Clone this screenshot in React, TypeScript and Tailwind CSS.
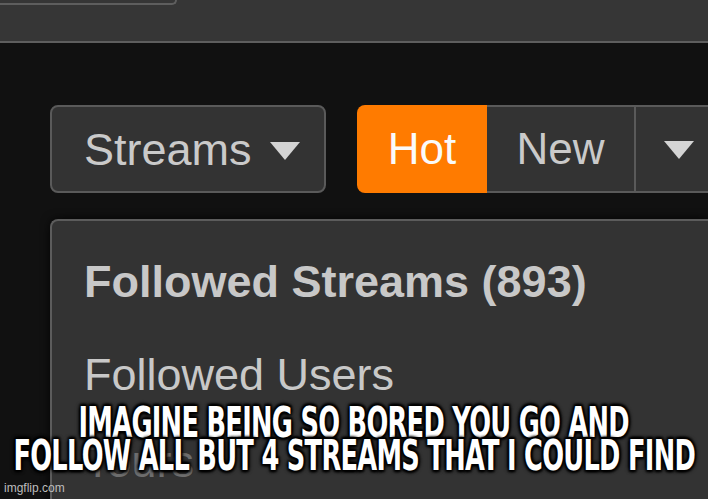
import React from "react";

function Caret({ className = "" }: { className?: string }) {
  return (
    <svg viewBox="0 0 30 18" className={className} aria-hidden="true">
      <path d="M0 0 H30 L15 18 Z" fill="#d4d4d4" />
    </svg>
  );
}

const CAPTION = ["IMAGINE BEING SO BORED YOU GO AND", "FOLLOW ALL BUT 4 STREAMS THAT I COULD FIND"];

export default function App() {
  return (
    <div className="relative h-[499px] w-[708px] overflow-hidden bg-[#111111] font-['Liberation_Sans',Arial,sans-serif]">
      {/* top bar, cut off by the crop */}
      <div className="h-[43px] border-b-2 border-[#5e5e5e] bg-[#363636]">
        <div className="h-[5px] w-[177px] rounded-br-lg border-b-2 border-r-2 border-[#5e5e5e]" />
      </div>

      {/* sort controls */}
      <div className="ml-[50px] mt-[62px] flex h-[88px] gap-[31px]">
        <button
          type="button"
          className="flex w-[276px] items-center gap-[18px] rounded-lg border-2 border-[#5a5a5a] bg-[#333333] pl-[32px] text-[45px] leading-none text-[#cacaca]"
        >
          Streams
          <Caret className="mt-[4px] h-[18px] w-[30px]" />
        </button>
        <div className="flex flex-1">
          <button
            type="button"
            className="flex w-[130px] items-center justify-center rounded-l-lg bg-[#ff7b00] text-[44px] leading-none text-[#fafafa]"
          >
            Hot
          </button>
          <div className="flex flex-1 border-y-2 border-[#5a5a5a] bg-[#333333]">
            <button
              type="button"
              className="flex w-[149px] items-center justify-center border-r-2 border-[#5a5a5a] text-[44px] leading-none text-[#cacaca]"
            >
              New
            </button>
            <button type="button" className="flex items-center pl-[28px]">
              <Caret className="mt-[2px] h-[18px] w-[30px]" />
            </button>
          </div>
        </div>
      </div>

      {/* followed menu */}
      <div className="ml-[50px] mt-[26px] h-[300px] rounded-tl-lg border-l-2 border-t-2 border-[#5c5c5c] bg-[#333333] pl-[32px] pt-[38px] text-[45px] leading-none text-[#c8c8c8] shadow-[0_0_10px_rgba(0,0,0,0.8)]">
        <div className="font-bold">Followed Streams (893)</div>
        <div className="mt-[48px]">Followed Users</div>
        <div className="mt-[42px] text-[#6e6e6e]">Tours</div>
      </div>

      {/* meme caption */}
      <div className="absolute inset-x-0 top-[406px] font-['DejaVu_Sans_Condensed','DejaVu_Sans',sans-serif] text-[42px] font-bold leading-[33px] tracking-tight text-white [text-shadow:2px_2px_3px_#000,-2px_-2px_3px_#000,2px_-2px_3px_#000,-2px_2px_3px_#000,0_0_7px_#000]">
        {CAPTION.map((line) => (
          <div key={line} className="flex justify-center whitespace-nowrap">
            <span className="inline-block origin-center scale-x-[0.68]">{line}</span>
          </div>
        ))}
      </div>

      <div className="absolute bottom-[5px] left-[4px] text-[12px] leading-none text-[#bdbdbd]">imgflip.com</div>
    </div>
  );
}
